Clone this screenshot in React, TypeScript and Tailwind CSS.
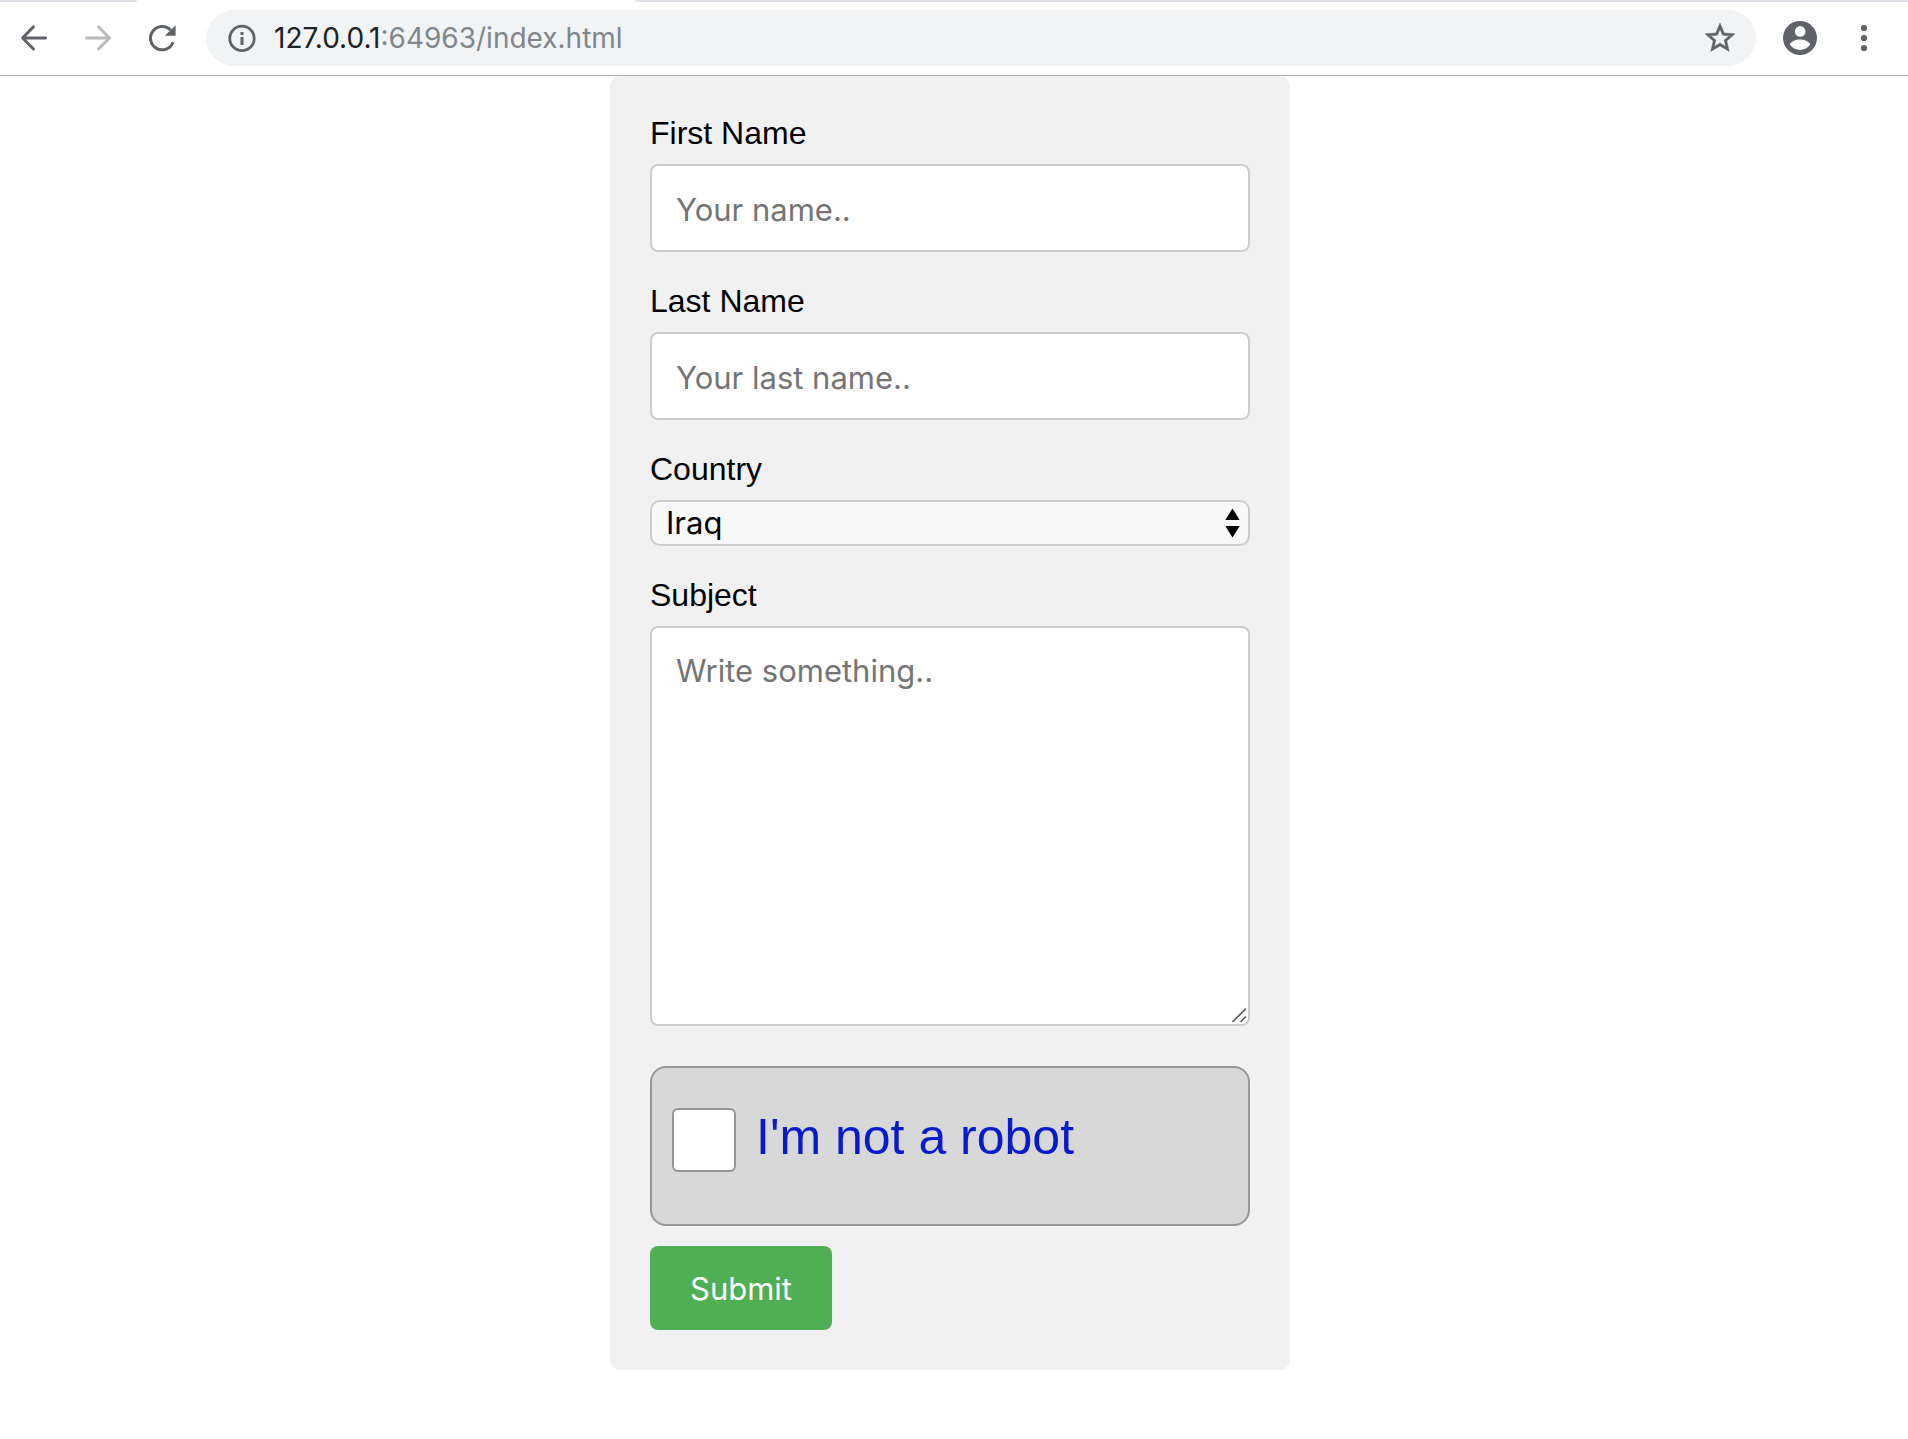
import type { ReactNode } from "react";

function BackIcon() {
  return (
    <svg width="32" height="32" viewBox="0 0 32 32" fill="none" stroke="currentColor" strokeWidth="3" strokeLinecap="round" strokeLinejoin="round">
      <path d="M27.500 16H5M15.500 4.800L4.600 16l10.900 11" />
    </svg>
  );
}

function ForwardIcon() {
  return (
    <svg width="32" height="32" viewBox="0 0 32 32" fill="none" stroke="currentColor" strokeWidth="3" strokeLinecap="round" strokeLinejoin="round">
      <path d="M4.500 16h23M16.500 4.800L27.400 16 16.500 27" />
    </svg>
  );
}

function ReloadIcon() {
  return (
    <svg width="32" height="32" viewBox="0 0 32 32" fill="none">
      <path d="M27 20.2A11.6 11.6 0 1 1 24.6 8.3" stroke="currentColor" strokeWidth="3" />
      <path d="M29.6 3.2v10.6H18.8z" fill="currentColor" />
    </svg>
  );
}

function InfoIcon() {
  return (
    <svg width="32" height="32" viewBox="0 0 32 32" fill="none">
      <circle cx="16" cy="16.400" r="12.2" stroke="currentColor" strokeWidth="2.8" />
      <path d="M14.5 10h3v3h-3zM14.5 15h3v8h-3z" fill="currentColor" />
    </svg>
  );
}

function StarIcon() {
  return (
    <svg width="36" height="36" viewBox="0 0 24 24" fill="currentColor" stroke="currentColor" strokeWidth="0.3">
      <path d="M22 9.24l-7.19-.62L12 2 9.19 8.63 2 9.24l5.46 4.73L5.82 21 12 17.27 18.18 21l-1.63-7.03L22 9.24zM12 15.4l-3.76 2.27 1-4.28-3.32-2.88 4.38-.38L12 6.1l1.71 4.04 4.38.38-3.32 2.88 1 4.28L12 15.4z" />
    </svg>
  );
}

function AccountIcon() {
  return (
    <svg width="34" height="34" viewBox="0 0 34 34">
      <circle cx="17" cy="17" r="17" fill="currentColor" />
      <circle cx="17.2" cy="10.4" r="5.3" fill="#fff" />
      <path d="M6.8 23.6c1.6-3.3 5.8-5 10.2-5s8.6 1.700 10.200 5c-2.200 3.300-6 5.300-10.200 5.300s-8-2-10.200-5.300z" fill="#fff" />
    </svg>
  );
}

function MoreIcon() {
  return (
    <svg width="32" height="32" viewBox="0 0 32 32" fill="currentColor">
      <circle cx="16" cy="6" r="3.100" />
      <circle cx="16" cy="16" r="3.100" />
      <circle cx="16" cy="26" r="3.100" />
    </svg>
  );
}

function Toolbar() {
  return (
    <header className="border-b border-[#b0b0b2] bg-white">
      <div className="flex h-0.5 justify-between">
        <div className="w-[137px] rounded-br-sm bg-[#dee1e6]" />
        <div className="ml-[498px] grow rounded-bl-sm bg-[#dee1e6]" />
      </div>
      <div className="flex items-center pt-2 pr-7 pb-[9px] pl-[18px] text-[#5f6368]">
        <nav className="flex gap-8">
          <button type="button" aria-label="Back"><BackIcon /></button>
          <button type="button" aria-label="Forward" disabled className="text-[#bababc]"><ForwardIcon /></button>
          <button type="button" aria-label="Reload"><ReloadIcon /></button>
        </nav>
        <div className="ml-7 flex h-14 grow items-center rounded-full bg-[#f1f3f4] pr-[18px] pl-5">
          <button type="button" aria-label="Site information"><InfoIcon /></button>
          <div
            role="textbox"
            aria-label="Address"
            contentEditable
            suppressContentEditableWarning
            spellCheck={false}
            className="ml-4 grow font-['Inter',sans-serif] text-[28px] leading-8 text-[#80868b] outline-none"
          >
            <span className="text-[#202124]">127.0.0.1</span>:64963/index.html
          </div>
          <button type="button" aria-label="Bookmark this page"><StarIcon /></button>
        </div>
        <button type="button" aria-label="Profile" className="ml-[27px]"><AccountIcon /></button>
        <button type="button" aria-label="Menu" className="ml-[31px]"><MoreIcon /></button>
      </div>
    </header>
  );
}

function Field({ id, label, children }: { id: string; label: string; children: ReactNode }) {
  return (
    <div className="flex flex-col gap-3.5">
      <label htmlFor={id} className="text-[32px] leading-[34px]">{label}</label>
      {children}
    </div>
  );
}

export default function App() {
  return (
    <div className="min-h-screen bg-white font-['Liberation_Sans',Arial,sans-serif] text-black">
      <Toolbar />
      <main className="pr-2">
        <form
          className="mx-auto flex max-w-[680px] flex-col gap-8 rounded-[10px] bg-[#f1f1f1] p-10"
          onSubmit={(e) => e.preventDefault()}
        >
          <Field id="fname" label="First Name">
            <input
              id="fname"
              type="text"
              placeholder="Your name.."
              className="h-[88px] w-full rounded-lg border-2 border-[#ccc] bg-white px-6 pt-0.5 font-['Inter',sans-serif] text-[31px] placeholder:text-[#757575]"
            />
          </Field>
          <Field id="lname" label="Last Name">
            <input
              id="lname"
              type="text"
              placeholder="Your last name.."
              className="h-[88px] w-full rounded-lg border-2 border-[#ccc] bg-white px-6 pt-0.5 font-['Inter',sans-serif] text-[31px] placeholder:text-[#757575]"
            />
          </Field>
          <Field id="country" label="Country">
            <div className="relative">
              <select
                id="country"
                defaultValue="Iraq"
                className="block h-[46px] w-full appearance-none rounded-[10px] border-2 border-[#ccc] bg-[#f8f8f8] pr-10 pl-3.5 font-['Inter',sans-serif] text-[31px] leading-9"
              >
                <option>Iraq</option>
              </select>
              <svg className="pointer-events-none absolute top-2 right-2.5" width="15" height="30" viewBox="0 0 15 30">
                <path d="M7.500 0.500L14.700 12H0.300zM7.500 29.500L14.700 18H0.300z" />
              </svg>
            </div>
          </Field>
          <Field id="subject" label="Subject">
            <div className="relative">
              <textarea
                id="subject"
                placeholder="Write something.."
                className="block h-[400px] w-full resize-none rounded-lg border-2 border-[#ccc] bg-white px-6 py-6 font-['Inter',sans-serif] text-[31px] leading-[38px] placeholder:text-[#757575]"
              />
              <svg className="pointer-events-none absolute right-[3px] bottom-[3px]" width="16" height="16" viewBox="0 0 16 16" stroke="#555" strokeWidth="1.600">
                <path d="M1.500 15L15 1.500M9.500 15L15 9.500" />
              </svg>
            </div>
          </Field>
          <div className="flex flex-col items-start gap-5 pt-2">
            <div className="flex w-full items-start gap-5 rounded-2xl border-2 border-[#979797] bg-[#d8d8d8] px-5 pt-10 pb-[52px]">
              <input
                id="robot"
                type="checkbox"
                className="size-16 shrink-0 appearance-none rounded-md border-2 border-[#979797] bg-white checked:bg-[#071bcd]"
              />
              <label htmlFor="robot" className="text-[50px] leading-[58px] text-[#071bcd]">I'm not a robot</label>
            </div>
            <button
              type="submit"
              className="h-[84px] rounded-lg bg-[#50ae55] px-10 pt-0.5 font-['Inter',sans-serif] text-[31px] text-white"
            >
              Submit
            </button>
          </div>
        </form>
      </main>
    </div>
  );
}
